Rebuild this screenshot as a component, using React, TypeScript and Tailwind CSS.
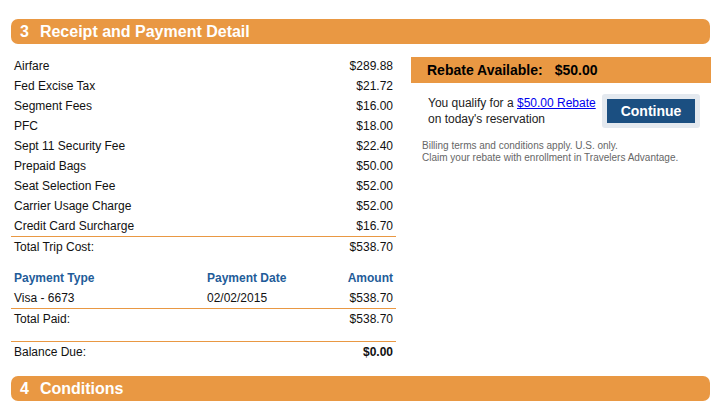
import React from "react";

const items: [string, string][] = [
  ["Airfare", "$289.88"],
  ["Fed Excise Tax", "$21.72"],
  ["Segment Fees", "$16.00"],
  ["PFC", "$18.00"],
  ["Sept 11 Security Fee", "$22.40"],
  ["Prepaid Bags", "$50.00"],
  ["Seat Selection Fee", "$52.00"],
  ["Carrier Usage Charge", "$52.00"],
  ["Credit Card Surcharge", "$16.70"],
];

function Bar({ n, title }: { n: string; title: string }) {
  return (
    <div className="ml-[11px] w-[699px] h-[25px] rounded-[7px] bg-[#e99843] flex items-center pl-[9px] text-white font-bold text-[16px]">
      <span>{n}</span>
      <span className="ml-[11px]">{title}</span>
    </div>
  );
}

export default function App() {
  return (
    <div
      className="w-[720px] h-[417px] bg-white text-[#111] overflow-hidden pt-[19px]"
      style={{ fontFamily: '"Liberation Sans", Arial, sans-serif' }}
    >
      <Bar n="3" title="Receipt and Payment Detail" />
      <div className="flex mt-[12px] ml-[11px]">
        <div className="w-[385px] text-[12px]">
          {items.map(([l, v]) => (
            <div key={l} className="flex justify-between h-5 leading-5 px-[3px]">
              <span>{l}</span>
              <span>{v}</span>
            </div>
          ))}
          <div className="border-t border-[#e99843] flex justify-between h-[21px] leading-5 px-[3px]">
            <span>Total Trip Cost:</span>
            <span>$538.70</span>
          </div>
          <div className="h-[11px]" />
          <div className="flex h-5 leading-5 px-[3px] font-bold text-[#1f5c99]">
            <span className="w-[193px]">Payment Type</span>
            <span className="flex-1">Payment Date</span>
            <span>Amount</span>
          </div>
          <div className="flex h-5 leading-5 px-[3px]">
            <span className="w-[193px]">Visa - 6673</span>
            <span className="flex-1">02/02/2015</span>
            <span>$538.70</span>
          </div>
          <div className="border-t border-[#e99843] flex justify-between h-[33px] leading-5 px-[3px]">
            <span>Total Paid:</span>
            <span>$538.70</span>
          </div>
          <div className="border-t border-[#e99843] flex justify-between h-[21px] leading-5 px-[3px]">
            <span>Balance Due:</span>
            <span className="font-bold">$0.00</span>
          </div>
        </div>
        <div className="ml-[15px] w-[300px] mt-[1px]">
          <div className="h-[26px] bg-[#e99843] flex items-center pl-[16px] font-bold text-[14px] text-black">
            <span>Rebate Available:</span>
            <span className="ml-[12px]">$50.00</span>
          </div>
          <div className="flex items-start">
            <div className="pl-[17px] mt-[12px] text-[12px] leading-[16px] text-[#222] w-[191px]">
              <div>
                You qualify for a{" "}
                <a href="#" className="text-[#0000ee] underline">
                  $50.00 Rebate
                </a>
              </div>
              <div>on today's reservation</div>
            </div>
            <div className="mt-[11px] p-[5px] bg-[#e4e9ef] rounded-[3px]">
              <div className="w-[88px] h-[24px] bg-[#1b4f81] text-white font-bold text-[14px] flex items-center justify-center">
                Continue
              </div>
            </div>
          </div>
          <div className="pl-[11px] mt-[12px] text-[10px] leading-[12px] text-[#666]">
            <div>Billing terms and conditions apply. U.S. only.</div>
            <div>Claim your rebate with enrollment in Travelers Advantage.</div>
          </div>
        </div>
      </div>
      <div className="mt-[14px]">
        <Bar n="4" title="Conditions" />
      </div>
    </div>
  );
}
